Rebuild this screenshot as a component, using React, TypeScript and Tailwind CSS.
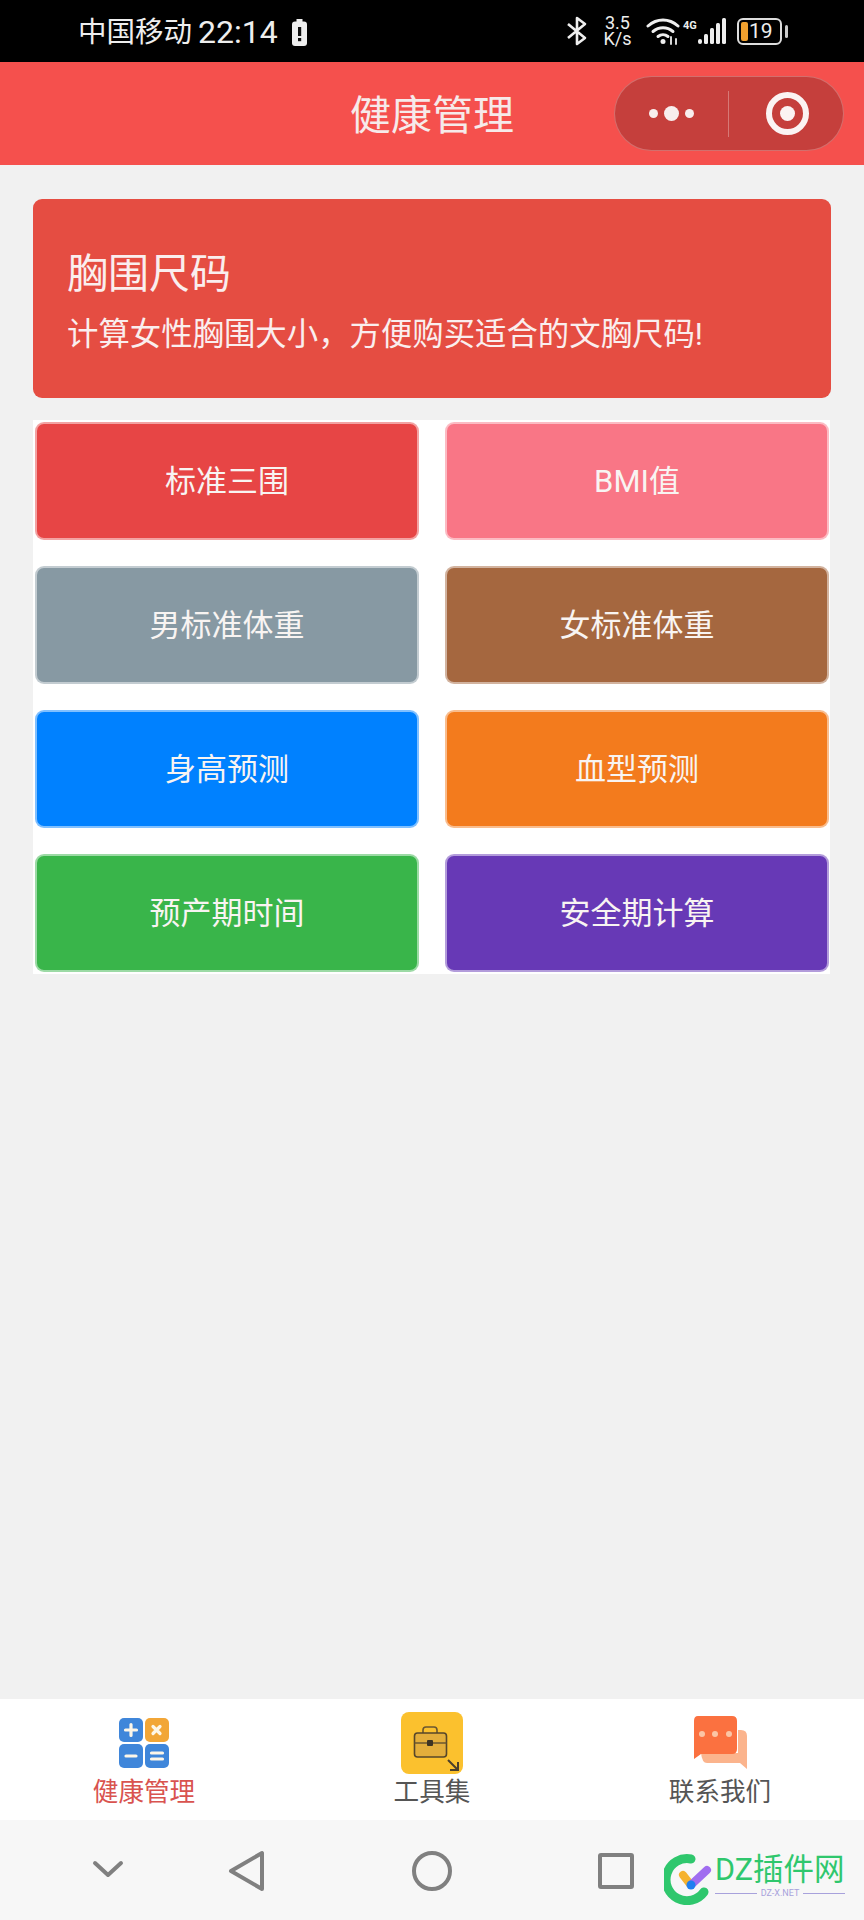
const CJK = "font-['Roboto','Noto_Sans_CJK_SC',sans-serif]";

const tools = [
  { label: '标准三围', color: 'bg-[#e74545]' },
  { label: 'BMI值', color: 'bg-[#f97686]' },
  { label: '男标准体重', color: 'bg-[#8799a3]' },
  { label: '女标准体重', color: 'bg-[#a5673f]' },
  { label: '身高预测', color: 'bg-[#0081ff]' },
  { label: '血型预测', color: 'bg-[#f37b1d]' },
  { label: '预产期时间', color: 'bg-[#39b54a]' },
  { label: '安全期计算', color: 'bg-[#6739b6]' },
];

function StatusBar() {
  return (
    <div className="flex h-[62px] items-center justify-between bg-black pl-[78px] pr-[76px] text-[#eeeeee]">
      <div className="flex items-center pt-[3px]">
        <span className="pt-[1px] text-[28.500px] leading-none">中国移动</span>
        <span className="ml-[6px] pb-[1px] text-[32px] leading-none">22:14</span>
        <svg className="ml-[14px]" width="15" height="27" viewBox="0 0 15 27">
          <rect x="4.500" y="0" width="6" height="3" fill="#eeeeee" />
          <rect x="0" y="2.500" width="15" height="24.500" rx="3" fill="#eeeeee" />
          <rect x="6" y="8" width="3.200" height="9" fill="#111" />
          <rect x="6" y="19" width="3.200" height="3.200" fill="#111" />
        </svg>
      </div>
      <div className="flex items-center">
        <svg width="20" height="30" viewBox="0 0 20 30" fill="none" stroke="#eeeeee" strokeWidth="2.600">
          <path d="M1 8l17 14-8 6V2l8 6L1 22" strokeLinejoin="round" />
        </svg>
        <div className="ml-[15px] w-[31px] text-center text-[18px] leading-[16px]">
          3.5
          <br />
          K/s
        </div>
        <svg className="ml-[13px]" width="34" height="28" viewBox="0 0 34 28" fill="none" stroke="#eeeeee" strokeWidth="3" strokeLinecap="round">
          <path d="M2 9c9-8 21-8 30 0" />
          <path d="M7 14.500c6-5 14-5 20 0" />
          <path d="M12 19.500c3-2.500 7-2.500 10 0" />
          <circle cx="17" cy="24.500" r="2.500" fill="#eeeeee" stroke="none" />
          <path d="M25 20v7M30 22v5" strokeWidth="1.800" />
        </svg>
        <div className="mb-[12px] ml-[3px] w-[15px] text-[11px] font-bold leading-none">4G</div>
        <svg width="28" height="28" viewBox="0 0 28 28" fill="#eeeeee">
          <rect x="0" y="22" width="4" height="5" rx="2" />
          <rect x="6" y="17" width="4" height="10" rx="1.500" />
          <rect x="12" y="11" width="4" height="16" rx="1.500" />
          <rect x="18" y="6" width="4" height="21" rx="1.500" />
          <rect x="24" y="1" width="4" height="26" rx="1.500" />
        </svg>
        <div className="relative ml-[11px] flex h-[27px] w-[45px] items-center rounded-[6px] border-2 border-[#dddddd] pl-[2px]">
          <div className="h-[19px] w-[7px] rounded-[2px] bg-[#f0a02e]" />
          <span className="ml-[1px] text-[21px] leading-none">19</span>
        </div>
        <div className="ml-[3px] h-[13px] w-[3px] rounded-full bg-[#cccccc]" />
      </div>
    </div>
  );
}

function Header() {
  return (
    <div className="relative flex h-[103px] items-center justify-center bg-[#f5504d] pt-[5px] text-[41px] leading-none text-[#f6eaea]">
      健康管理
      <div className="absolute right-[20px] top-[14px] flex h-[75px] w-[230px] items-center rounded-full border border-white/25 bg-[#c53f3c]">
        <div className="flex w-[113px] items-center justify-center gap-[6px]">
          <span className="h-[9px] w-[9px] rounded-full bg-[#f8eeee]" />
          <span className="h-[15px] w-[15px] rounded-full bg-[#f8eeee]" />
          <span className="h-[9px] w-[9px] rounded-full bg-[#f8eeee]" />
        </div>
        <div className="h-[46px] w-px bg-white/30" />
        <div className="flex flex-1 items-center justify-center pl-[3px]">
          <div className="flex h-[43px] w-[43px] items-center justify-center rounded-full border-[6px] border-[#fbf3f3]">
            <div className="h-[15px] w-[15px] rounded-full bg-[#fbf3f3]" />
          </div>
        </div>
      </div>
    </div>
  );
}

function CalcIcon() {
  return (
    <svg width="50" height="50" viewBox="0 0 50 50">
      <rect x="0" y="0" width="24" height="24" rx="5" fill="#3f86da" />
      <rect x="26" y="0" width="24" height="24" rx="5" fill="#f2a637" />
      <rect x="0" y="26" width="24" height="24" rx="5" fill="#3f86da" />
      <rect x="26" y="26" width="24" height="24" rx="5" fill="#3f86da" />
      <path d="M6.500 12h11M12 6.500v11M34 8.500l7 7M41 8.500l-7 7M7 38h10M32.500 35h11M32.500 41h11" stroke="#fdf6e8" strokeWidth="3.200" strokeLinecap="round" />
    </svg>
  );
}

function ToolboxIcon() {
  return (
    <svg width="62" height="62" viewBox="0 0 62 62">
      <rect x="0" y="0" width="62" height="62" rx="8" fill="#fbc12e" />
      <path d="M22 21v-3a3 3 0 013-3h8a3 3 0 013 3v3" fill="none" stroke="#6b5730" strokeWidth="1.600" />
      <rect x="13.500" y="21" width="32" height="24" rx="3" fill="#e3ae3b" stroke="#57472a" strokeWidth="1.600" />
      <path d="M13.500 31h32" stroke="#6b5730" strokeWidth="1.600" />
      <rect x="26" y="28" width="6" height="6" rx="1" fill="#3d3423" />
      <path d="M47 48l10 10M57 50v8h-8" fill="none" stroke="#4b3f2b" strokeWidth="2" />
    </svg>
  );
}

function ChatIcon() {
  return (
    <svg width="56" height="56" viewBox="0 0 56 56">
      <path d="M9 38h37V15h3q6 0 6 6v33l-7-6H15q-5 0-6-10z" fill="#fbb48d" />
      <path d="M6 1h34q5 0 5 5v28q0 5-5 5H9l-7 5V6q0-5 4-5z" fill="#fb7140" />
      <circle cx="10" cy="19" r="3" fill="#fbc5a5" />
      <circle cx="23" cy="19" r="3" fill="#fbc5a5" />
      <circle cx="37" cy="19" r="3" fill="#fbc5a5" />
    </svg>
  );
}

function TabBar() {
  return (
    <div className="grid h-[121px] grid-cols-3 bg-white text-[25.600px] leading-none">
      <div className="flex flex-col items-center pt-[19px] text-[#d9534f]">
        <CalcIcon />
        <span className="mt-[12px]">健康管理</span>
      </div>
      <div className="flex flex-col items-center pt-[13px] text-[#555555]">
        <ToolboxIcon />
        <span className="mt-[6px]">工具集</span>
      </div>
      <div className="flex flex-col items-center pt-[16px] text-[#555555]">
        <ChatIcon />
        <span className="mt-[9px]">联系我们</span>
      </div>
    </div>
  );
}

function NavBar() {
  return (
    <div className="relative flex h-[100px] items-start bg-[#f7f7f7] pl-[92px] pt-[30px]">
      <svg className="mt-[10px]" width="32" height="20" viewBox="0 0 32 20" fill="none" stroke="#808080" strokeWidth="4" strokeLinecap="round" strokeLinejoin="round">
        <path d="M3 3l13 12L29 3" />
      </svg>
      <svg className="ml-[104px]" width="38" height="42" viewBox="0 0 38 42" fill="none" stroke="#808080" strokeWidth="4" strokeLinejoin="round">
        <path d="M34 3v36L3 21z" />
      </svg>
      <svg className="ml-[145px]" width="42" height="42" viewBox="0 0 42 42" fill="none" stroke="#808080" strokeWidth="4">
        <circle cx="21" cy="21" r="18" />
      </svg>
      <div className="ml-[145px] mt-[3px] h-[36px] w-[36px] rounded-[3px] border-4 border-[#808080]" />
      {/* 水印 */}
      <div className="absolute left-[664px] top-[33px] flex items-start">
        <svg width="52" height="52" viewBox="0 0 52 52" fill="none" strokeLinecap="round">
          <path d="M27 6A21 21 0 1 0 40 39" stroke="#2fc76d" strokeWidth="9" />
          <path d="M19 22l7 9" stroke="#f5b22f" strokeWidth="8" />
          <path d="M43 17L28 31" stroke="#a06df0" strokeWidth="8" />
          <circle cx="27" cy="32" r="4.500" fill="#1f7ff0" />
        </svg>
        <div className="-ml-[1px] flex w-[130px] flex-col">
          <span className="whitespace-nowrap text-[30.500px] leading-[34px] text-[#2fc76d]">DZ插件网</span>
          <div className="mt-[1px] flex items-center gap-[4px] text-[9px] leading-[10px] text-[#a8a2dc]">
            <div className="h-px flex-1 bg-[#a8a2dc]" />
            DZ-X.NET
            <div className="h-px flex-1 bg-[#a8a2dc]" />
          </div>
        </div>
      </div>
    </div>
  );
}

export default function App() {
  return (
    <div className={`flex h-[1920px] w-[864px] flex-col overflow-hidden bg-[#f1f1f1] ${CJK}`}>
      <StatusBar />
      <Header />
      <div className="flex-1 px-[33px] pt-[34px]">
        <div className="h-[199px] rounded-[9px] bg-[#e54d42] px-[34px] pt-[50px] text-[#faeeee]">
          <div className="text-[41px] leading-[50px]">胸围尺码</div>
          <div className="mt-[15px] text-[31.400px] leading-[42px]">计算女性胸围大小，方便购买适合的文胸尺码!</div>
        </div>
        <div className="mt-[22px] grid w-[797px] grid-cols-2 gap-x-[26px] gap-y-[26px] bg-white pb-[2px] pl-[2px] pr-[1px] pt-[2px]">
          {tools.map((tool) => (
            <div
              key={tool.label}
              className={`flex h-[118px] items-center justify-center rounded-[9px] border-2 border-white/50 text-[31px] leading-none text-[#f8f4f2] ${tool.color}`}
            >
              {tool.label}
            </div>
          ))}
        </div>
      </div>
      <TabBar />
      <NavBar />
    </div>
  );
}
